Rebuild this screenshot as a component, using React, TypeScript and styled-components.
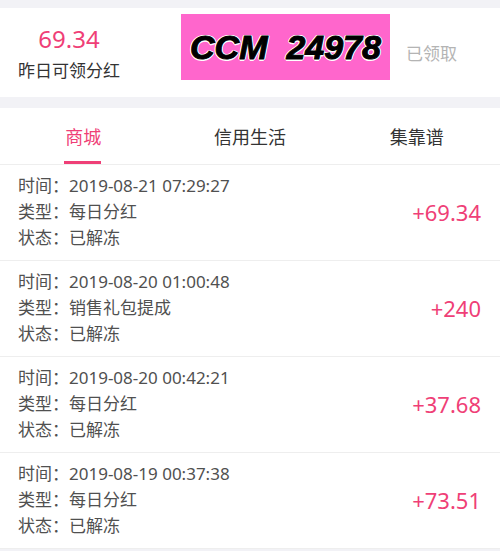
import styled, { createGlobalStyle } from 'styled-components';

const PINK = '#ef3f77';

const GlobalStyle = createGlobalStyle`
  body {
    margin: 0;
    background: #f2f2f6;
    font-family: "Noto Sans", "Noto Sans CJK SC", sans-serif;
  }
`;

type Record = {
  time: string;
  kind: string;
  status: string;
  amount: string;
};

const records: Record[] = [
  { time: '2019-08-21 07:29:27', kind: '每日分红', status: '已解冻', amount: '+69.34' },
  { time: '2019-08-20 01:00:48', kind: '销售礼包提成', status: '已解冻', amount: '+240' },
  { time: '2019-08-20 00:42:21', kind: '每日分红', status: '已解冻', amount: '+37.68' },
  { time: '2019-08-19 00:37:38', kind: '每日分红', status: '已解冻', amount: '+73.51' },
];

const tabs = ['商城', '信用生活', '集靠谱'];

function App() {
  const active = 0;
  return (
    <Page>
      <GlobalStyle />
      <Summary>
        <Yesterday>
          <Amount>69.34</Amount>
          <Caption>昨日可领分红</Caption>
        </Yesterday>
        <Badge>CCM&nbsp;&nbsp;24978</Badge>
        <Claimed>已领取</Claimed>
      </Summary>

      <List>
        <Tabs>
          {tabs.map((t, i) => (
            <Tab key={t} $active={i === active}>
              {t}
            </Tab>
          ))}
        </Tabs>
        {records.map((r) => (
          <Row key={r.time}>
            <Info>
              <Line>
                <Label>时间：</Label>
                <span>{r.time}</span>
              </Line>
              <Line>
                <Label>类型：</Label>
                <span>{r.kind}</span>
              </Line>
              <Line>
                <Label>状态：</Label>
                <span>{r.status}</span>
              </Line>
            </Info>
            <Value>{r.amount}</Value>
          </Row>
        ))}
      </List>
    </Page>
  );
}
export default App;

const Page = styled.div`
  padding-top: 8px;
  width: 500px;
`;

const Summary = styled.div`
  height: 89px;
  background: #fff;
  display: flex;
  align-items: flex-start;
`;

const Yesterday = styled.div`
  width: 138px;
  padding-top: 16px;
  display: flex;
  flex-direction: column;
  align-items: center;
`;

const Amount = styled.div`
  font-size: 24px;
  line-height: 30px;
  color: ${PINK};
`;

const Caption = styled.div`
  margin-top: 4px;
  font-size: 17px;
  line-height: 26px;
  color: #333;
`;

const Badge = styled.div`
  margin: 6px 0 0 43px;
  width: 209px;
  height: 66px;
  background: #ff66cc;
  display: flex;
  align-items: center;
  justify-content: center;
  font-family: "Liberation Sans", sans-serif;
  font-style: italic;
  font-weight: 700;
  font-size: 34px;
  color: #000;
  white-space: nowrap;
  -webkit-text-stroke: 1px #000;
  text-shadow: 1.5px 0 0 #fff, -1.5px 0 0 #fff, 0 1.5px 0 #fff,
    0 -1.5px 0 #fff, 1px 1px 0 #fff, -1px -1px 0 #fff, 1px -1px 0 #fff,
    -1px 1px 0 #fff;
`;

const Claimed = styled.div`
  align-self: center;
  margin-left: 16px;
  font-size: 17px;
  color: #b4b4b4;
`;

const List = styled.div`
  margin-top: 11px;
  background: #fff;
`;

const Tabs = styled.div`
  display: grid;
  grid-template-columns: repeat(3, 1fr);
  height: 56px;
  border-bottom: 1px solid #eeeeee;
`;

const Tab = styled.div<{ $active: boolean }>`
  position: relative;
  display: flex;
  align-items: center;
  justify-content: center;
  font-size: 18px;
  color: ${(p) => (p.$active ? PINK : '#333')};

  &::after {
    content: '';
    display: ${(p) => (p.$active ? 'block' : 'none')};
    position: absolute;
    bottom: 0;
    left: 50%;
    width: 37px;
    height: 3px;
    margin-left: -19px;
    background: ${PINK};
  }
`;

const Row = styled.div`
  display: flex;
  align-items: center;
  justify-content: space-between;
  padding: 8px 19px 9px 18px;
  border-bottom: 1px solid #eeeeee;
`;

const Info = styled.div`
  display: flex;
  flex-direction: column;
`;

const Line = styled.div`
  display: flex;
  font-size: 17px;
  line-height: 26px;
  color: #505050;
  white-space: nowrap;
`;

const Label = styled.span`
  flex: 0 0 49px;
`;

const Value = styled.div`
  font-size: 22px;
  color: ${PINK};
`;
